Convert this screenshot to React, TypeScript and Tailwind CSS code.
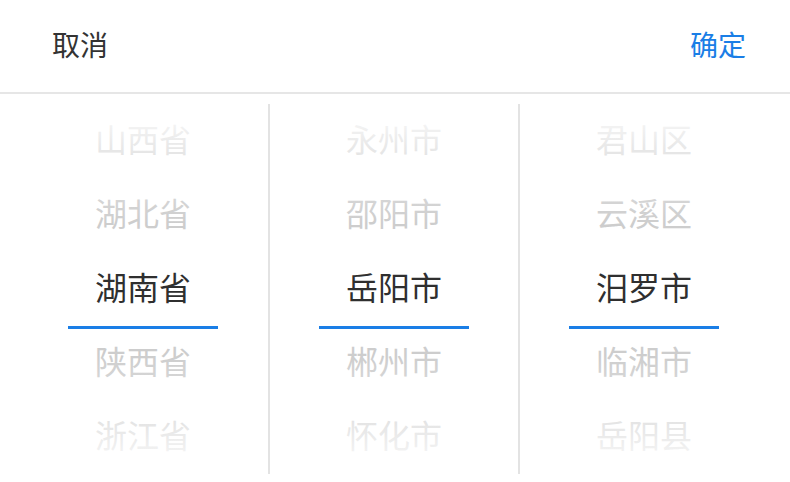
import React from "react";

const columns = [
  ["山西省", "湖北省", "湖南省", "陕西省", "浙江省"],
  ["永州市", "邵阳市", "岳阳市", "郴州市", "怀化市"],
  ["君山区", "云溪区", "汨罗市", "临湘市", "岳阳县"],
];

function Column({ items, first }: { items: string[]; first: boolean }) {
  return (
    <div className={`relative w-[250px] flex flex-col ${first ? "" : "border-l-2 border-[#e3e3e3]"}`}>
      {items.map((t, i) => (
        <div
          key={t}
          className={`relative h-[74px] flex items-center justify-center pb-[6px] text-[32px] ${
            i === 2 ? "text-[#2f2f2f]" : "text-[#cdcdcd]"
          }`}
        >
          {t}
          {i === 2 && (
            <div className="absolute left-1/2 -translate-x-1/2 bottom-[-3px] w-[150px] h-[3px] bg-[#1a7ee6]" />
          )}
        </div>
      ))}
      <div className="absolute inset-x-0 top-0 h-[120px] pointer-events-none bg-gradient-to-b from-white/95 via-white/40 to-white/0" />
      <div className="absolute inset-x-0 bottom-0 h-[120px] pointer-events-none bg-gradient-to-t from-white/95 via-white/40 to-white/0" />
    </div>
  );
}

export default function App() {
  return (
    <div
      className="w-[790px] h-[482px] bg-white overflow-hidden"
      style={{ fontFamily: '"Noto Sans CJK SC", "Noto Sans", sans-serif' }}
    >
      <div className="h-[94px] flex items-center justify-between pl-[52px] pr-[44px] pb-[4px] border-b-2 border-[#e6e6e6] text-[28px]">
        <span className="text-[#333333]">取消</span>
        <span className="text-[#1a7ee6]">确定</span>
      </div>
      <div className="flex pl-[18px] py-[10px]">
        {columns.map((c, i) => (
          <Column key={i} items={c} first={i === 0} />
        ))}
      </div>
    </div>
  );
}
